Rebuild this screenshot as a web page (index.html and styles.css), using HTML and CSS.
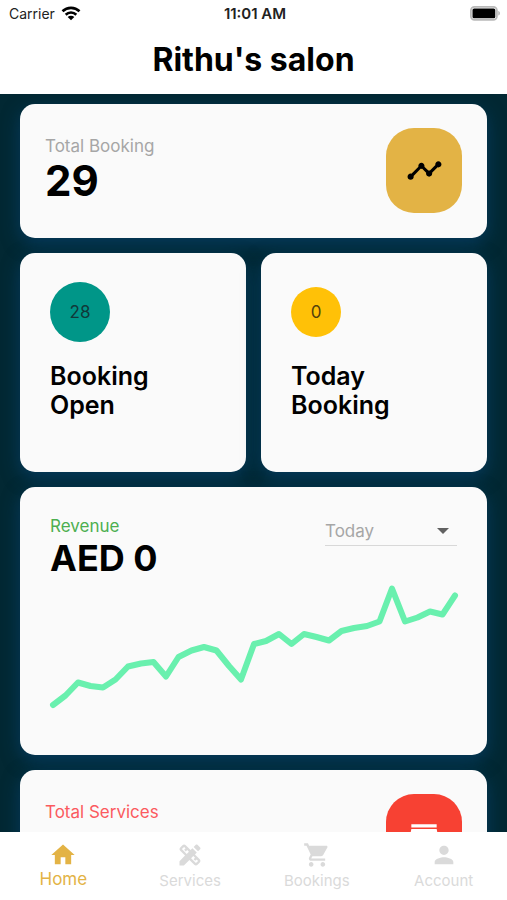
FILE: index.html
```html
<!DOCTYPE html>
<html lang="en">
<head>
    <meta charset="UTF-8">
    <meta name="viewport" content="width=device-width, initial-scale=1.0">
    <title>Rithu's salon</title>
    <link rel="stylesheet" href="styles.css">
</head>
<body>

    <header>
        <div class="status-bar">
            <div class="carrier">
                <span>Carrier</span>
                <svg width="20" height="15" viewBox="0 0 20 15">
                    <g fill="none" stroke="#000" stroke-width="2.6">
                        <path d="M1.5 5.3a12.2 12.2 0 0 1 17 0"/>
                        <path d="M4.7 8.7a7.6 7.6 0 0 1 10.6 0"/>
                    </g>
                    <path d="M10 14.2 6.7 11a4.7 4.7 0 0 1 6.6 0z"/>
                </svg>
            </div>
            <span class="time">11:01 AM</span>
            <svg class="battery" width="31" height="15" viewBox="0 0 31 15">
                <rect x="0.9" y="0.9" width="26" height="13" rx="3.6" fill="#fff" stroke="#b9b9b9" stroke-width="1.8"/>
                <rect x="2.5" y="2.5" width="22.8" height="9.8" rx="1.6"/>
                <path d="M28.3 5v4.6c2.2-.7 2.2-3.9 0-4.6z" fill="#b5b5b5"/>
            </svg>
        </div>
        <h1>Rithu's salon</h1>
    </header>

    <main>
        <section class="card summary">
            <div>
                <div class="label">Total Booking</div>
                <div class="total">29</div>
            </div>
            <div class="tile gold">
                <svg width="37" height="37" viewBox="0 0 24 24"><path d="M23 8c0 1.1-.9 2-2 2-.18 0-.35-.02-.51-.07l-3.56 3.55c.05.16.07.34.07.52 0 1.1-.9 2-2 2s-2-.9-2-2c0-.18.02-.36.07-.52l-2.55-2.55c-.16.05-.34.07-.52.07s-.36-.02-.52-.07l-4.55 4.56c.05.16.07.33.07.51 0 1.1-.9 2-2 2s-2-.9-2-2 .9-2 2-2c.18 0 .35.02.51.07l4.56-4.55C8.02 9.36 8 9.18 8 9c0-1.1.9-2 2-2s2 .9 2 2c0 .18-.02.36-.07.52l2.55 2.55c.16-.05.34-.07.52-.07s.36.02.52.07l3.55-3.56C19.02 8.35 19 8.18 19 8c0-1.1.9-2 2-2s2 .9 2 2z"/></svg>
            </div>
        </section>

        <div class="row">
            <section class="card count">
                <div class="circle-box"><span class="circle teal">28</span></div>
                <h2>Booking<br>Open</h2>
            </section>
            <section class="card count">
                <div class="circle-box"><span class="circle amber">0</span></div>
                <h2>Today<br>Booking</h2>
            </section>
        </div>

        <section class="card revenue">
            <div class="revenue-head">
                <div>
                    <div class="label green">Revenue</div>
                    <div class="amount">AED 0</div>
                </div>
                <div class="period">
                    <select id="period" name="period" aria-label="Revenue period">
                        <option>Today</option>
                        <option>Week</option>
                        <option>Month</option>
                    </select>
                </div>
            </div>
            <svg class="chart" viewBox="0 0 407 136">
                <polyline points="3,125 15.5,115.5 28,102.5 40.5,106 53,107.5 65.5,99.5 78,86.5 91,83.5 103.5,82 116,96.5 128.5,77 141.5,70.5 154,67 166.5,70.5 179,86 191,99.5 204,64 216,61 229,54 241.5,64 254,54 266.5,57 279,60.5 291.5,51 304,48 317,46 329.5,41.5 342,8.5 355,41.5 367.5,37.5 380,31.5 392.5,34.5 405,15.5"/>
            </svg>
        </section>

        <section class="card summary">
            <div class="summary-text">
                <div class="label red">Total Services</div>
            </div>
            <div class="tile tomato">
                <svg width="38" height="38" viewBox="0 0 24 24"><path fill="#fff" d="M20 4H4v2h16V4zm1 10v-2l-1-5H4l-1 5v2h1v6h10v-6h4v6h2v-6h1zm-9 4H6v-4h6v4z"/></svg>
            </div>
        </section>
    </main>

    <nav>
        <a href="#" class="active">
            <svg viewBox="0 0 24 24"><path d="M10 20v-6h4v6h5v-8h3L12 3 2 12h3v8z"/></svg>
            Home
        </a>
        <a href="#">
            <svg viewBox="0 0 24 24"><path d="M16.24 11.51l1.57-1.57-3.75-3.75-1.57 1.57-4.14-4.13c-.78-.78-2.05-.78-2.83 0l-1.9 1.9c-.78.78-.78 2.05 0 2.83l4.13 4.13L3 17.25V21h3.75l4.76-4.76 4.13 4.13c.95.95 2.23.6 2.83 0l1.9-1.9c.78-.78.78-2.05 0-2.83l-4.13-4.13zm-7.06-.44L5.04 6.94l1.89-1.9L8.2 6.31 7.02 7.5l1.41 1.41 1.19-1.19 1.45 1.45-1.89 1.9zm7.88 7.89l-4.13-4.13 1.9-1.9 1.45 1.45-1.19 1.19 1.41 1.41 1.19-1.19 1.27 1.27-1.9 1.9zM20.71 7.04c.39-.39.39-1.02 0-1.41l-2.34-2.34c-.47-.47-1.12-.29-1.41 0l-1.83 1.83 3.75 3.75 1.83-1.83z"/></svg>
            Services
        </a>
        <a href="#">
            <svg viewBox="0 0 24 24"><path d="M7 18c-1.1 0-1.99.9-1.99 2S5.9 22 7 22s2-.9 2-2-.9-2-2-2zM1 2v2h2l3.6 7.59-1.35 2.45c-.16.28-.25.61-.25.96 0 1.1.9 2 2 2h12v-2H7.42c-.14 0-.25-.11-.25-.25l.03-.12.9-1.63h7.45c.75 0 1.41-.41 1.75-1.03l3.58-6.49c.08-.14.12-.31.12-.48 0-.55-.45-1-1-1H5.21l-.94-2H1zm16 16c-1.1 0-1.99.9-1.99 2s.89 2 1.99 2 2-.9 2-2-.9-2-2-2z"/></svg>
            Bookings
        </a>
        <a href="#">
            <svg viewBox="0 0 24 24"><path d="M12 12c2.21 0 4-1.79 4-4s-1.79-4-4-4-4 1.79-4 4 1.79 4 4 4zm0 2c-2.67 0-8 1.34-8 4v2h16v-2c0-2.66-5.33-4-8-4z"/></svg>
            Account
        </a>
    </nav>

</body>
</html>
```

FILE: styles.css
```css
* {
    box-sizing: border-box;
}

body {
    font-family: Inter, "Liberation Sans", sans-serif;
    margin: 0;
    height: 100vh;
    display: flex;
    flex-direction: column;
    background-color: #fff;
    color: #000;
}

svg {
    display: block;
}

/* Status bar and title */
.status-bar {
    display: grid;
    grid-template-columns: 1fr auto 1fr;
    align-items: center;
    height: 27px;
    padding: 0 6px 0 9px;
    font-size: 14px;
    color: #222;
}

.carrier {
    display: flex;
    align-items: center;
    gap: 6px;
}

.time {
    font-size: 15px;
    font-weight: 600;
}

.battery {
    justify-self: end;
}

h1 {
    margin: 0;
    height: 67px;
    line-height: 66px;
    text-align: center;
    font-size: 32px;
    font-weight: 700;
}

/* Scrolling content */
main {
    flex: 1;
    min-height: 0;
    overflow-y: auto;
    scrollbar-width: none;
    display: flex;
    flex-direction: column;
    gap: 15px;
    padding: 10px 20px;
    background-color: #022833;
}

.card {
    flex-shrink: 0;
    background-color: #fafafa;
    border-radius: 15px;
    box-shadow: 0 6px 18px rgba(8, 72, 122, 0.6);
}

.label {
    font-size: 17px;
    line-height: 20px;
    color: #a6a6a6;
}

.green {
    color: #4caf50;
}

.red {
    color: #fb5a5f;
}

.summary {
    display: flex;
    justify-content: space-between;
    align-items: center;
    padding: 24px 25px 25px;
}

.summary-text {
    min-height: 70px;
}

.total {
    font-size: 42px;
    line-height: 50px;
    font-weight: 700;
}

.tile {
    display: flex;
    justify-content: center;
    align-items: center;
    width: 76px;
    height: 85px;
    border-radius: 28px;
}

.gold {
    background-color: #e3b345;
}

.tomato {
    background-color: #f74133;
}

.row {
    flex-shrink: 0;
    display: grid;
    grid-template-columns: 1fr 1fr;
    gap: 15px;
}

.count {
    padding: 29px 30px 52px;
}

.circle-box {
    display: flex;
    align-items: center;
    height: 60px;
    margin-bottom: 20px;
}

.circle {
    display: flex;
    justify-content: center;
    align-items: center;
    border-radius: 50%;
    font-size: 17px;
}

.teal {
    width: 60px;
    height: 60px;
    background-color: #009688;
    color: #10393a;
}

.amber {
    width: 50px;
    height: 50px;
    background-color: #ffc107;
    color: #54420c;
}

h2 {
    margin: 0;
    font-size: 25px;
    line-height: 29px;
    font-weight: 600;
}

/* Revenue chart */
.revenue {
    padding: 29px 30px 39px;
}

.revenue-head {
    display: flex;
    justify-content: space-between;
    align-items: flex-start;
}

.amount {
    font-size: 36px;
    line-height: 44px;
    font-weight: 700;
}

.period {
    position: relative;
    width: 132px;
    border-bottom: 1px solid #d8d8d8;
}

.period::after {
    content: "";
    position: absolute;
    top: 12px;
    right: 8px;
    border: 6px solid transparent;
    border-top-color: #616161;
    border-bottom: none;
    pointer-events: none;
}

select {
    display: block;
    width: 100%;
    height: 29px;
    padding: 0;
    border: none;
    background: none;
    appearance: none;
    font-family: inherit;
    font-size: 17px;
    color: #a6a6a6;
}

.chart {
    width: 100%;
    overflow: visible;
}

.chart polyline {
    fill: none;
    stroke: #69f0ae;
    stroke-width: 6;
    stroke-linecap: round;
    stroke-linejoin: round;
}

/* Bottom navigation */
nav {
    display: grid;
    grid-template-columns: repeat(4, 1fr);
    height: 68px;
    padding-top: 9px;
    background-color: #fff;
}

nav a {
    display: flex;
    flex-direction: column;
    align-items: center;
    font-size: 15px;
    line-height: 24px;
    color: #dadada;
    text-decoration: none;
}

nav svg {
    width: 28px;
    height: 28px;
    fill: currentColor;
}

nav .active {
    font-size: 17px;
    line-height: 20px;
    color: #e3b345;
}
```
